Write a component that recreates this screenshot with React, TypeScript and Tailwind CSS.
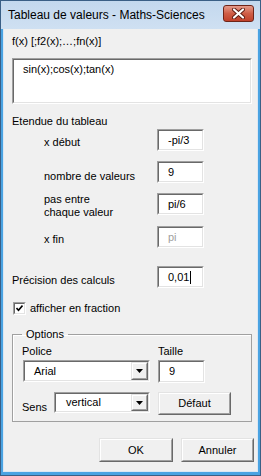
import type { ReactNode } from "react";

const sunkenOuter =
  "border border-t-[#a0a0a0] border-l-[#a0a0a0] border-r-white border-b-white";
const sunkenInner =
  "border border-t-[#696969] border-l-[#696969] border-r-[#e3e3e3] border-b-[#e3e3e3]";
const raisedOuter =
  "border border-t-[#e3e3e3] border-l-[#e3e3e3] border-r-[#696969] border-b-[#696969]";
const raisedInner =
  "border border-t-white border-l-white border-r-[#a0a0a0] border-b-[#a0a0a0] bg-[#f0f0f0]";

const TextBox = ({
  value,
  className,
  disabled,
  caret,
}: {
  value: string;
  className: string;
  disabled?: boolean;
  caret?: boolean;
}) => (
  <div className={`${sunkenOuter} ${className} shrink-0`}>
    <div
      className={`${sunkenInner} h-full bg-white flex items-center pl-[9px] ${
        disabled ? "text-[#a0a0a0]" : "text-black"
      }`}
    >
      {value}
      {caret && <span className="ml-[1px] w-px h-[13px] bg-black" />}
    </div>
  </div>
);

const Combo = ({ value, className, pl }: { value: string; className: string; pl: string }) => (
  <div className={`${sunkenOuter} ${className} shrink-0`}>
    <div className={`${sunkenInner} h-full bg-white flex items-center`}>
      <span className={`flex-1 ${pl}`}>{value}</span>
      <div className={`${raisedOuter} w-[17px] h-full`}>
        <div className={`${raisedInner} h-full flex items-center justify-center`}>
          <svg width="7" height="4" viewBox="0 0 7 4">
            <path d="M0 0h7L3.5 4z" fill="#000" />
          </svg>
        </div>
      </div>
    </div>
  </div>
);

const Button = ({ children, className }: { children: ReactNode; className: string }) => (
  <div className={`${raisedOuter} ${className} shrink-0`}>
    <div className={`${raisedInner} h-full flex items-center justify-center`}>{children}</div>
  </div>
);

const Row = ({
  label,
  labelPt,
  value,
  mt,
  disabled,
  caret,
  indent = true,
}: {
  label: ReactNode;
  labelPt: string;
  value: string;
  mt: string;
  disabled?: boolean;
  caret?: boolean;
  indent?: boolean;
}) => (
  <div className={`flex items-start h-[22px] ${mt}`}>
    <div className={`${indent ? "w-[145px] pl-[32px]" : "w-[145px]"} ${labelPt} leading-[13px]`}>
      {label}
    </div>
    <TextBox value={value} className="w-[47px] h-[22px]" disabled={disabled} caret={caret} />
  </div>
);

const App = () => {
  return (
    <div className="w-[261px] h-[476px] font-['Liberation_Sans',Arial,sans-serif] text-[11px] text-black">
      <div className="w-full h-full flex flex-col border border-[#3a5f86] bg-[#4aa3e2]">
        <div className="h-[28px] shrink-0 flex items-center justify-between pl-[7px] pr-[6px] bg-gradient-to-b from-[#c3d8ee] to-[#cfe0f2]">
          <span className="text-[12px] text-black pb-[1px]">Tableau de valeurs - Maths-Sciences</span>
          <div className="w-[31px] h-[17px] mb-[4px] rounded-[3px] border border-[#6e2418] bg-gradient-to-b from-[#e49a8a] via-[#cf5d46] to-[#c0402a] flex items-center justify-center">
            <svg width="13" height="11" viewBox="0 0 13 11">
              <path d="M2 1.5l9 8M11 1.5l-9 8" stroke="#5a1a10" strokeWidth="4" strokeLinecap="round" />
              <path d="M2 1.5l9 8M11 1.5l-9 8" stroke="#ffffff" strokeWidth="2.2" strokeLinecap="round" />
            </svg>
          </div>
        </div>
        <div className="flex-1 mx-[2px] mb-[3px] bg-[#f0f0f0] flex flex-col pl-[8px] border-l border-r border-b border-[#dbe7f3]">
          <div className="mt-[6px] h-[13px] leading-[13px]">f(x) [;f2(x);…;fn(x)]</div>
          <div className={`${sunkenOuter} mt-[10px] w-[240px] h-[46px]`}>
            <div className={`${sunkenInner} h-full bg-white pl-[9px] pt-[3px] leading-[13px]`}>
              sin(x);cos(x);tan(x)
            </div>
          </div>
          <div className="mt-[11px] h-[13px] leading-[13px]">Etendue du tableau</div>
          <Row label="x début" labelPt="pt-[7px]" value="-pi/3" mt="mt-[1px]" />
          <Row label="nombre de valeurs" labelPt="pt-[9px]" value="9" mt="mt-[10px]" />
          <Row
            label={
              <>
                pas entre
                <br />
                chaque valeur
              </>
            }
            labelPt="pt-0"
            value="pi/6"
            mt="mt-[10px]"
          />
          <Row label="x fin" labelPt="pt-[7px]" value="pi" mt="mt-[11px]" disabled />
          <Row
            label="Précision des calculs"
            labelPt="pt-[8px]"
            value="0,01"
            mt="mt-[18px]"
            caret
            indent={false}
          />
          <div className="mt-[14px] h-[13px] flex items-center">
            <div className={`${sunkenOuter} w-[13px] h-[13px] ml-[1px]`}>
              <div className={`${sunkenInner} h-full bg-white flex items-center justify-center`}>
                <svg width="7" height="7" viewBox="0 0 7 7">
                  <path d="M0.5 3l2 2.2 4-4.7" stroke="#000" strokeWidth="1.6" fill="none" />
                </svg>
              </div>
            </div>
            <span className="ml-[4px] leading-[13px]">afficher en fraction</span>
          </div>
          <fieldset className="mt-[13px] w-[240px] border border-[#a0a0a0] shadow-[inset_1px_1px_0_#ffffff] pb-[6px]">
            <legend className="ml-[9px] px-[4px] leading-[13px]">Options</legend>
            <div className="mt-[4px] h-[13px] leading-[13px] flex pl-[9px]">
              <span className="w-[136px]">Police</span>
              <span>Taille</span>
            </div>
            <div className="mt-[2px] flex pl-[10px]">
              <Combo value="Arial" className="w-[127px] h-[22px]" pl="pl-[9px]" />
              <TextBox value="9" className="ml-[8px] w-[47px] h-[23px]" />
            </div>
            <div className="mt-[9px] flex pl-[9px] items-start">
              <span className="w-[32px] pt-[9px] leading-[13px]">Sens</span>
              <Combo value="vertical" className="w-[96px] h-[21px]" pl="pl-[10px]" />
              <Button className="ml-[8px] w-[73px] h-[23px]">Défaut</Button>
            </div>
          </fieldset>
          <div className="mt-[16px] flex pl-[87px] gap-[8px]">
            <Button className="w-[74px] h-[24px]">OK</Button>
            <Button className="w-[73px] h-[24px]">Annuler</Button>
          </div>
        </div>
      </div>
    </div>
  );
};

export default App;
